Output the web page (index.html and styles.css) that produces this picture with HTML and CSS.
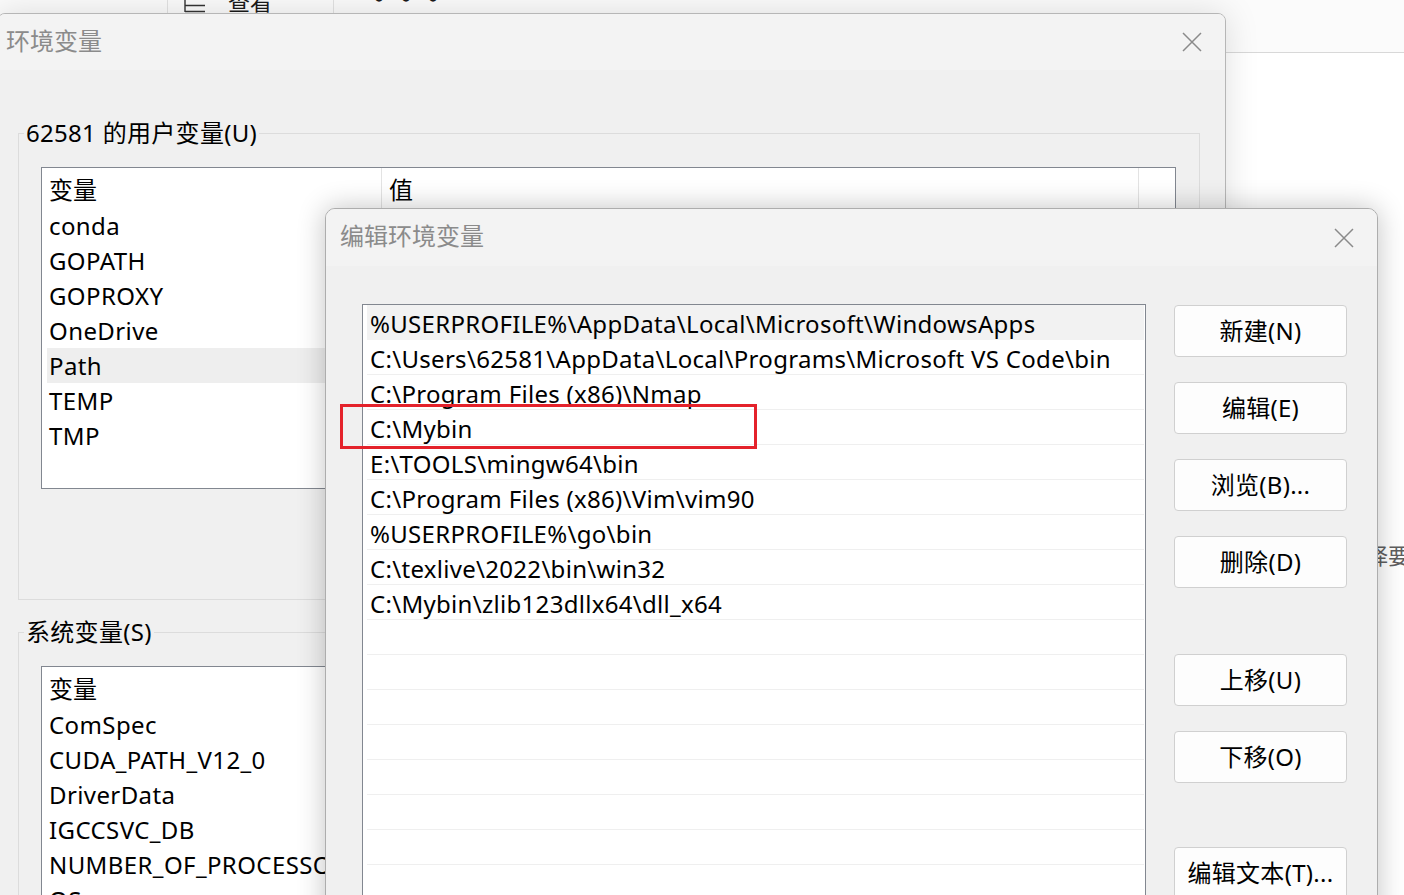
FILE: index.html
```html
<!DOCTYPE html>
<html lang="zh-CN">
<head>
<meta charset="utf-8">
<title>环境变量</title>
<link rel="stylesheet" href="styles.css">
</head>
<body>
<div class="desktop">
  <div class="explorer">
    <div class="toolbar">
      <div class="tb-row">
        <span class="tb-div"></span>
        <svg class="tb-icon" viewBox="0 0 22 22" width="22" height="22"><path d="M1 0V21M1 14.5H21M1 20.5H21" fill="none" stroke="#333" stroke-width="1.4"/></svg>
        <span class="tb-text">查看</span>
        <span class="tb-div tb-div2"></span>
        <span class="tb-more">···</span>
      </div>
    </div>
    <span class="hint">选择要</span>
  </div>

  <section class="window outer">
    <header class="titlebar outer-title">
      <span class="title">环境变量</span>
      <svg class="close" viewBox="0 0 20 20" width="20" height="20"><path d="M1 1L19 19M19 1L1 19" fill="none" stroke="#8a8a8a" stroke-width="1.5"/></svg>
    </header>
    <div class="outer-body">
      <div class="group">
        <div class="group-label">62581 的用户变量(U)</div>
        <div class="listview user-list">
          <div class="lv-header"><span class="col-name">变量</span><span class="col-value">值</span><span class="col-rest"></span></div>
          <div class="lv-row">conda</div>
          <div class="lv-row">GOPATH</div>
          <div class="lv-row">GOPROXY</div>
          <div class="lv-row">OneDrive</div>
          <div class="lv-row selected">Path</div>
          <div class="lv-row">TEMP</div>
          <div class="lv-row">TMP</div>
        </div>
      </div>
      <div class="group sys-group">
        <div class="group-label">系统变量(S)</div>
        <div class="listview sys-list">
          <div class="lv-header"><span class="col-name">变量</span><span class="col-value">值</span><span class="col-rest"></span></div>
          <div class="lv-row">ComSpec</div>
          <div class="lv-row">CUDA_PATH_V12_0</div>
          <div class="lv-row">DriverData</div>
          <div class="lv-row">IGCCSVC_DB</div>
          <div class="lv-row">NUMBER_OF_PROCESSORS</div>
          <div class="lv-row">OS</div>
        </div>
      </div>
    </div>
  </section>

  <section class="window inner">
    <header class="titlebar inner-title">
      <span class="title">编辑环境变量</span>
      <svg class="close" viewBox="0 0 20 20" width="20" height="20"><path d="M1 1L19 19M19 1L1 19" fill="none" stroke="#8a8a8a" stroke-width="1.5"/></svg>
    </header>
    <div class="inner-body">
      <div class="pathlist">
        <div class="p-row selected">%USERPROFILE%\AppData\Local\Microsoft\WindowsApps</div>
        <div class="p-row">C:\Users\62581\AppData\Local\Programs\Microsoft VS Code\bin</div>
        <div class="p-row">C:\Program Files (x86)\Nmap</div>
        <div class="p-row">C:\Mybin</div>
        <div class="p-row">E:\TOOLS\mingw64\bin</div>
        <div class="p-row">C:\Program Files (x86)\Vim\vim90</div>
        <div class="p-row">%USERPROFILE%\go\bin</div>
        <div class="p-row">C:\texlive\2022\bin\win32</div>
        <div class="p-row">C:\Mybin\zlib123dllx64\dll_x64</div>
        <div class="p-row"></div>
        <div class="p-row"></div>
        <div class="p-row"></div>
        <div class="p-row"></div>
        <div class="p-row"></div>
        <div class="p-row"></div>
        <div class="p-row"></div>
        <div class="p-row"></div>
        <div class="p-row"></div>
      </div>
      <div class="buttons">
        <button class="btn">新建(N)</button>
        <button class="btn">编辑(E)</button>
        <button class="btn">浏览(B)...</button>
        <button class="btn">删除(D)</button>
        <button class="btn sep">上移(U)</button>
        <button class="btn">下移(O)</button>
        <button class="btn sep2">编辑文本(T)...</button>
      </div>
    </div>
  </section>

  <div class="mark"></div>
</div>
</body>
</html>
```

FILE: styles.css
```css
* { box-sizing: border-box; }
html, body { margin: 0; padding: 0; }
body {
  width: 1404px;
  height: 895px;
  overflow: hidden;
  background: #fff;
  font-family: "Noto Sans", "Noto Sans CJK SC", sans-serif;
  font-size: 24px;
  color: #000;
}
.desktop { position: relative; width: 1404px; height: 895px; overflow: hidden; }

/* background explorer window */
.explorer { position: absolute; left: 0; top: 0; width: 1404px; height: 895px; background: #fff; }
.toolbar { height: 53px; background: #fbfbfb; border-bottom: 1px solid #d8d8d8; overflow: hidden; }
.tb-row {
  display: flex;
  align-items: center;
  height: 40px;
  margin-top: -20px;
  padding-left: 167px;
  font-family: "Noto Sans CJK SC", sans-serif;
  font-size: 22px;
  color: #1a1a1a;
}
.tb-div { width: 1px; height: 40px; background: #e2e2e2; }
.tb-div2 { margin-left: 61px; }
.tb-icon { margin-left: 16px; align-self: flex-end; margin-bottom: 7px; }
.tb-text { margin-left: 22px; line-height: 40px; }
.tb-more { margin-left: 30px; margin-top: -8px; font-size: 30px; font-weight: 700; letter-spacing: -3px; }
.hint {
  position: absolute;
  left: 1344px;
  top: 540px;
  white-space: nowrap;
  font-family: "Noto Sans CJK SC", sans-serif;
  font-size: 22px;
  line-height: 28px;
  color: #5f5f5f;
}

/* windows */
.window {
  position: absolute;
  background: #f0f0f0;
  border: 1px solid #b6b6b6;
  overflow: hidden;
}
.outer {
  left: -3px;
  top: 13px;
  width: 1229px;
  height: 900px;
  border-radius: 8px 8px 0 0;
  box-shadow: 0 0 34px rgba(0, 0, 0, 0.13);
}
.inner {
  left: 325px;
  top: 208px;
  width: 1053px;
  height: 720px;
  border-radius: 10px 10px 0 0;
  border-color: #adadad;
  box-shadow: 0 0 28px rgba(0, 0, 0, 0.24);
}
.titlebar {
  display: flex;
  align-items: center;
  background: #f3f3f3;
}
.title {
  font-family: "Noto Sans CJK SC", sans-serif;
  font-size: 24px;
  line-height: 30px;
  color: #8b8b8b;
}
.close { margin-left: auto; margin-right: 23px; }
.outer-title { height: 56px; padding-left: 8px; }
.outer-title .title { margin-top: -4px; }
.inner-title { height: 57px; padding-left: 14px; }
.inner-title .title { margin-top: -5px; }

/* outer body */
.outer-body { padding: 63px 0 0 20px; }
.group {
  width: 1182px;
  border: 1px solid #dcdcdc;
  padding: 0 23px 110px 22px;
}
.sys-group { margin-top: 32px; }
.group-label {
  width: fit-content;
  margin: -17px 0 0 -17px;
  padding: 0 2px;
  background: #f0f0f0;
  line-height: 32px;
  letter-spacing: 0.3px;
  white-space: nowrap;
}
.listview {
  margin-top: 18px;
  width: 1135px;
  height: 322px;
  background: #fff;
  border: 1px solid #828790;
  overflow: hidden;
  letter-spacing: 0.4px;
}
.sys-list { height: 400px; }
.lv-header { display: flex; height: 40px; line-height: 43px; letter-spacing: 0; }
.lv-header span { display: block; height: 40px; padding-left: 7px; }
.col-name { width: 340px; border-right: 1px solid #e3e3e3; }
.col-value { width: 757px; border-right: 1px solid #e3e3e3; }
.col-rest { flex: 1; }
.lv-row {
  height: 35px;
  line-height: 36px;
  margin-left: 5px;
  padding-left: 2px;
  white-space: nowrap;
}
.lv-row.selected { background: #eeeeee; }

/* inner body */
.inner-body { display: flex; align-items: flex-start; padding: 38px 0 0 36px; }
.pathlist {
  width: 784px;
  height: 620px;
  background: #fff;
  border: 1px solid #828790;
  padding: 0 1px 0 4px;
  overflow: hidden;
  letter-spacing: 0.3px;
}
.p-row {
  height: 35px;
  line-height: 37px;
  padding-left: 3px;
  border-bottom: 1px solid #efefef;
  white-space: nowrap;
}
.p-row.selected { background: #f2f2f2; border-bottom-color: #f2f2f2; }

.buttons { display: flex; flex-direction: column; margin-left: 28px; padding-top: 1px; }
.btn {
  width: 173px;
  height: 52px;
  margin: 0;
  padding: 0 0 4px 0;
  background: #fdfdfd;
  border: 1px solid #d0d0d0;
  border-radius: 4px;
  font-family: "Noto Sans", "Noto Sans CJK SC", sans-serif;
  font-size: 24px;
  letter-spacing: 0.3px;
  color: #000;
  text-align: center;
  white-space: nowrap;
}
.btn + .btn { margin-top: 25px; }
.btn.sep { margin-top: 66px; }
.btn.sep2 { margin-top: 64px; }

/* red highlight box */
.mark {
  position: absolute;
  left: 340px;
  top: 404px;
  width: 417px;
  height: 45px;
  border: 3px solid #e4222b;
}
```
